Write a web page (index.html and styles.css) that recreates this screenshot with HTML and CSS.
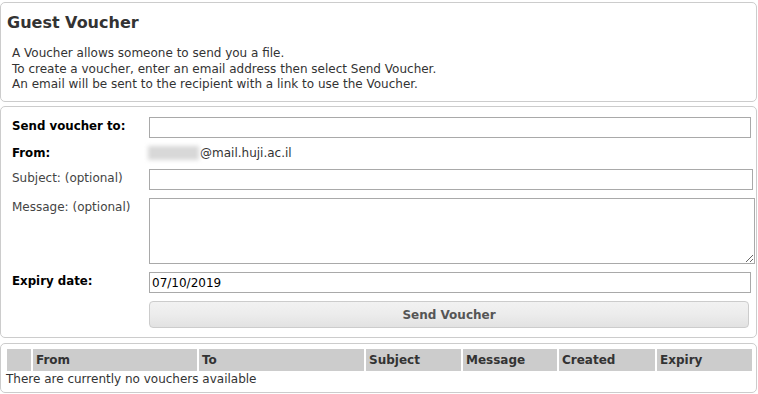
FILE: index.html
```html
<!DOCTYPE html>
<html lang="en">
<head>
    <meta charset="UTF-8">
    <meta name="viewport" content="width=device-width, initial-scale=1.0">
    <title>Guest Voucher</title>
<link rel="stylesheet" href="styles.css">
</head>

<body>

<div class="box box-intro">
    <h2>Guest Voucher</h2>
    <p class="intro">
        A Voucher allows someone to send you a file.<br>
        To create a voucher, enter an email address then select Send Voucher.<br>
        An email will be sent to the recipient with a link to use the Voucher.
    </p>
</div>

<form class="box box-form" name="frmVoucher" action="">

    <div class="row">
        <label class="lbl lbl-strong" for="to">Send voucher to:</label>
        <input type="text" id="to" name="to" class="fld fld-to">
    </div>

    <div class="row row-from">
        <span class="lbl lbl-strong">From:</span>
        <span class="from"><span class="blurred"></span>@mail.huji.ac.il</span>
    </div>

    <div class="row">
        <label class="lbl" for="subject">Subject: (optional)</label>
        <input type="text" id="subject" name="subject" class="fld fld-subject">
    </div>

    <div class="row">
        <label class="lbl" for="message">Message: (optional)</label>
        <textarea id="message" name="message" class="fld fld-message"></textarea>
    </div>

    <div class="row">
        <label class="lbl lbl-strong" for="expiry">Expiry date:</label>
        <input type="text" id="expiry" name="expiry" class="fld fld-expiry" value="07/10/2019">
    </div>

    <div class="row">
        <span class="lbl"></span>
        <button type="button" class="btn-send">Send Voucher</button>
    </div>

</form>

<div class="box box-list">
    <div class="thead">
        <span></span>
        <span>From</span>
        <span>To</span>
        <span>Subject</span>
        <span>Message</span>
        <span>Created</span>
        <span>Expiry</span>
    </div>
    <div class="empty">There are currently no vouchers available</div>
</div>

</body>
</html>
```

FILE: styles.css
```css
    :root {
        font-family: "DejaVu Sans", Verdana, sans-serif;
        font-size: 12px;
        color: #333;
    }

    body {
        margin: 0;
        padding-top: 2px;
        background: #fff;
    }

    .box {
        margin: 0 1px 4px 0;
        border: 1px solid #ccc;
        border-radius: 5px;
        background: #fff;
    }

    /* intro */
    .box-intro {
        height: 98px;
        padding: 0 6px;
    }
    .box-intro h2 {
        margin: 9px 0 0 0;
        font-size: 16px;
        line-height: 21px;
        color: #333;
    }
    .intro {
        margin: 13px 0 0 5px;
        line-height: 15.5px;
        font-size: 12px;
    }

    /* form */
    .box-form {
        display: flex;
        flex-direction: column;
        gap: 8px;
        padding: 10px 0 9px 11px;
        margin-bottom: 5px;
    }
    .row {
        display: flex;
        align-items: flex-start;
    }
    .row-from {
        height: 15px;
    }
    .lbl {
        flex: 0 0 137px;
        padding-top: 2px;
        font-size: 12px;
        color: #444;
    }
    .lbl-strong {
        font-size: 11.8px;
        font-weight: bold;
        color: #000;
    }
    .row-from .lbl {
        padding-top: 0;
    }

    .fld {
        box-sizing: border-box;
        height: 21px;
        margin: 0;
        padding: 1px 2px;
        border: 1px solid #a9a9a9;
        font-family: inherit;
        font-size: 12px;
        color: #000;
        background: #fff;
    }
    .fld-to      { width: 602px; }
    .fld-subject { width: 604px; }
    .fld-message { width: 606px; height: 66px; resize: vertical; }
    .fld-expiry  { width: 602px; }

    .from {
        display: flex;
        align-items: center;
        font-size: 12px;
        color: #333;
        margin-left: -1px;
    }
    .blurred {
        display: inline-block;
        width: 51px;
        height: 14px;
        margin-right: 1px;
        background: #d8d8d8;
        filter: blur(2px);
    }

    .btn-send {
        box-sizing: border-box;
        width: 600px;
        height: 27px;
        border: 1px solid #ccc;
        border-radius: 4px;
        background: linear-gradient(#f2f2f2, #ececec 50%, #e2e2e2);
        font-family: inherit;
        font-size: 12px;
        font-weight: bold;
        color: #555;
    }

    /* list */
    .box-list {
        height: 43px;
        padding-top: 5px;
        margin-bottom: 0;
    }
    .thead {
        display: grid;
        grid-template-columns: 24px 164px 165px 95px 94px 96px 95px;
        column-gap: 2px;
        margin-left: 6px;
        height: 21px;
    }
    .thead span {
        background: #ccc;
        padding-left: 3px;
        font-weight: bold;
        font-size: 12px;
        line-height: 22px;
        color: #333;
    }
    .empty {
        padding-left: 5px;
        line-height: 18px;
        font-size: 12px;
    }
```
